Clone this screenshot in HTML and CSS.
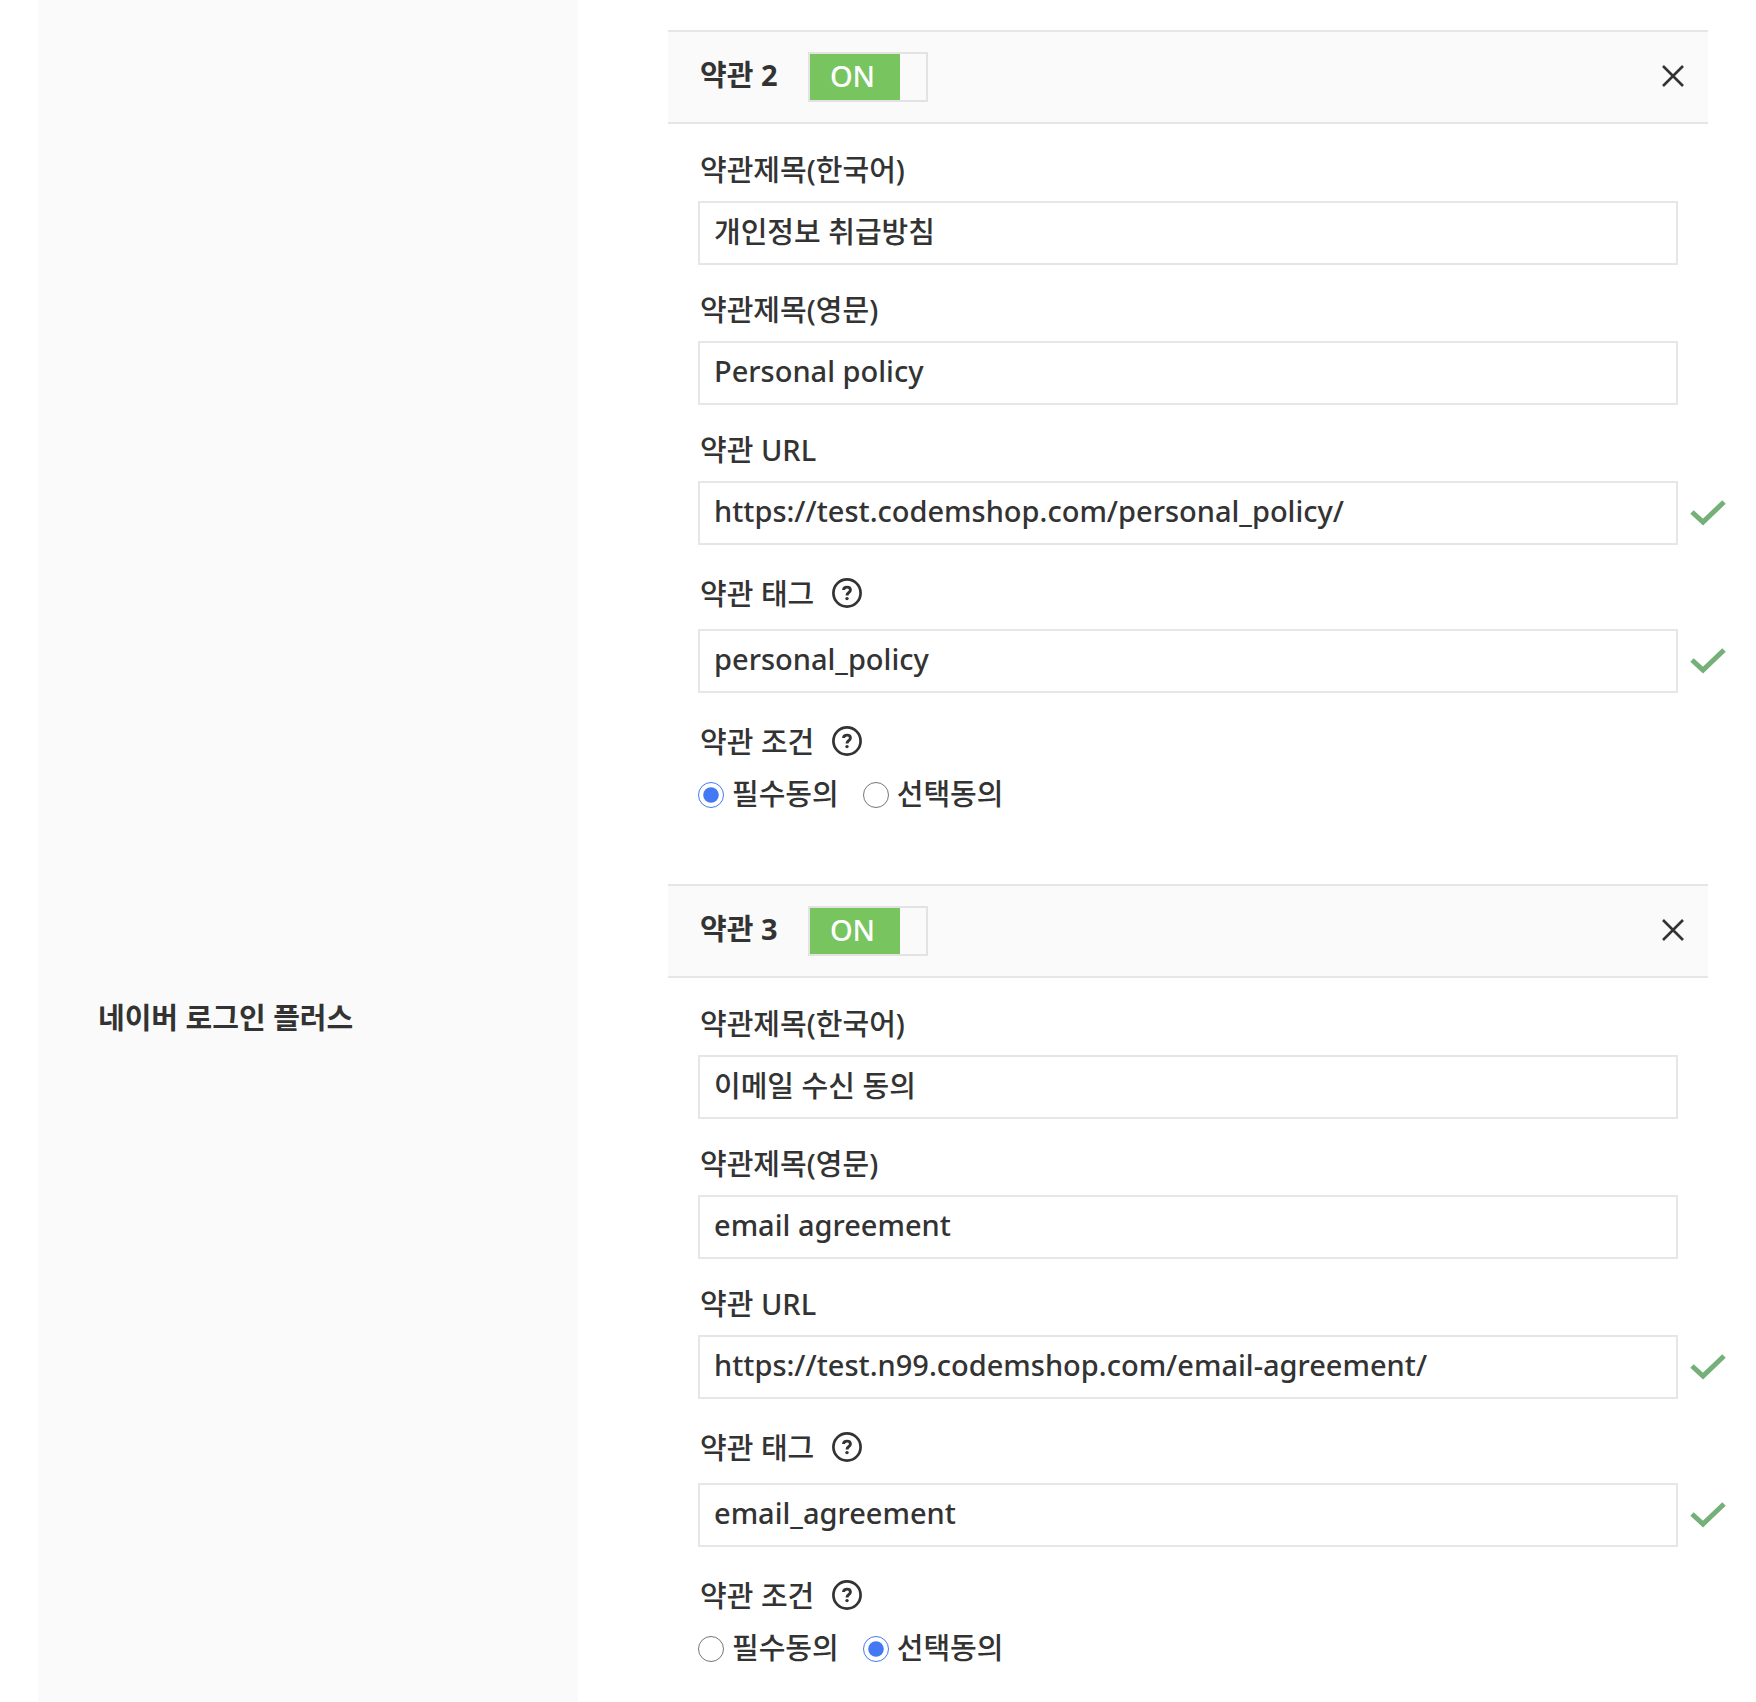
FILE: index.html
```
<!DOCTYPE html>
<html lang="ko">
<head>
    <meta charset="UTF-8">
    <meta name="viewport" content="width=device-width, initial-scale=1.0">
    <title>네이버 로그인 플러스</title>
    <link rel="stylesheet" href="styles.css">
</head>
<body>
    <!-- Shared icons -->
    <svg class="sprite" aria-hidden="true">
        <symbol id="icon-close" viewBox="0 0 24 24">
            <path d="M2 2 L22 22 M22 2 L2 22" fill="none" stroke="#333" stroke-width="2.6"/>
        </symbol>
        <symbol id="icon-check" viewBox="0 0 36 26">
            <path d="M2 12 L13 22 L34 2" fill="none" stroke="#74b077" stroke-width="5"/>
        </symbol>
        <symbol id="icon-help" viewBox="0 0 30 30">
            <circle cx="15" cy="15" r="13.6" fill="none" stroke="#333" stroke-width="2.7"/>
            <path d="M11.5 12 C11.8 8.2 18.4 8.2 18.4 12 C18.4 14.6 15 14.8 15 17.4" fill="none" stroke="#333" stroke-width="2.9"/>
            <circle cx="15" cy="20.6" r="1.7" fill="#333"/>
        </symbol>
    </svg>

    <div class="setting-row">
        <div class="setting-name">네이버 로그인 플러스</div>

        <form class="setting-body">
            <!-- 약관 2 -->
            <section class="terms">
                <div class="terms-header">
                    <h2>약관 2</h2>
                    <label class="toggle">
                        <input type="checkbox" aria-label="약관 2 사용" checked>
                        <span>ON</span>
                    </label>
                    <button type="button" class="remove" aria-label="삭제"><svg><use href="#icon-close"/></svg></button>
                </div>
                <div class="field">
                    <label for="title-ko-2">약관제목(한국어)</label>
                    <input type="text" id="title-ko-2" value="개인정보 취급방침">
                </div>
                <div class="field">
                    <label for="title-en-2">약관제목(영문)</label>
                    <input type="text" id="title-en-2" value="Personal policy">
                </div>
                <div class="field">
                    <label for="url-2">약관 URL</label>
                    <input type="text" id="url-2" value="https://test.codemshop.com/personal_policy/">
                    <svg class="check"><use href="#icon-check"/></svg>
                </div>
                <div class="field has-help">
                    <label for="tag-2">약관 태그 <svg class="help"><use href="#icon-help"/></svg></label>
                    <input type="text" id="tag-2" value="personal_policy">
                    <svg class="check"><use href="#icon-check"/></svg>
                </div>
                <fieldset class="condition">
                    <legend>약관 조건 <svg class="help"><use href="#icon-help"/></svg></legend>
                    <div class="options">
                        <label><input type="radio" name="condition-2" checked><span>필수동의</span></label>
                        <label><input type="radio" name="condition-2"><span>선택동의</span></label>
                    </div>
                </fieldset>
            </section>

            <!-- 약관 3 -->
            <section class="terms">
                <div class="terms-header">
                    <h2>약관 3</h2>
                    <label class="toggle">
                        <input type="checkbox" aria-label="약관 3 사용" checked>
                        <span>ON</span>
                    </label>
                    <button type="button" class="remove" aria-label="삭제"><svg><use href="#icon-close"/></svg></button>
                </div>
                <div class="field">
                    <label for="title-ko-3">약관제목(한국어)</label>
                    <input type="text" id="title-ko-3" value="이메일 수신 동의">
                </div>
                <div class="field">
                    <label for="title-en-3">약관제목(영문)</label>
                    <input type="text" id="title-en-3" value="email agreement">
                </div>
                <div class="field">
                    <label for="url-3">약관 URL</label>
                    <input type="text" id="url-3" value="https://test.n99.codemshop.com/email-agreement/">
                    <svg class="check"><use href="#icon-check"/></svg>
                </div>
                <div class="field has-help">
                    <label for="tag-3">약관 태그 <svg class="help"><use href="#icon-help"/></svg></label>
                    <input type="text" id="tag-3" value="email_agreement">
                    <svg class="check"><use href="#icon-check"/></svg>
                </div>
                <fieldset class="condition">
                    <legend>약관 조건 <svg class="help"><use href="#icon-help"/></svg></legend>
                    <div class="options">
                        <label><input type="radio" name="condition-3"><span>필수동의</span></label>
                        <label><input type="radio" name="condition-3" checked><span>선택동의</span></label>
                    </div>
                </fieldset>
            </section>
        </form>
    </div>
</body>
</html>
```
FILE: styles.css
```
* {
    box-sizing: border-box;
}

body {
    margin: 0;
    background: #fff;
    color: #333;
    font-family: "Noto Sans", "Noto Sans CJK KR", sans-serif;
    font-size: 29px;
    font-weight: 500;
    line-height: 40px;
}

input,
button {
    font: inherit;
    color: inherit;
}

.sprite {
    display: none;
}

.setting-row {
    display: flex;
    min-height: 100vh;
    padding-left: 38px;
}

.setting-name {
    display: flex;
    align-items: center;
    flex: 0 0 540px;
    padding: 334px 60px 0;
    background: #fafafa;
    font-weight: bold;
}

.setting-body {
    flex: 1;
    padding: 30px 0 0 90px;
}

.terms {
    margin-bottom: 66px;
}

.terms:last-child {
    margin-bottom: 0;
}

.terms-header {
    display: flex;
    align-items: center;
    height: 94px;
    margin: 0 48px 20px 0;
    padding: 0 23px 0 32px;
    background: #fafafa;
    border-top: 2px solid #e6e6e6;
    border-bottom: 2px solid #e6e6e6;
}

.terms-header h2 {
    margin: 0 30px 0 0;
    padding-bottom: 4px;
    font-size: 29px;
}

.toggle {
    width: 120px;
    height: 50px;
    border: 2px solid #e3e3e3;
    cursor: pointer;
}

.toggle input {
    position: absolute;
    opacity: 0;
}

.toggle span {
    display: block;
    width: 90px;
    height: 46px;
    padding-right: 4px;
    background: #78c55f;
    color: #fff;
    line-height: 44px;
    text-align: center;
}

.remove {
    margin-left: auto;
    padding: 0 0 2px;
    background: none;
    border: none;
    cursor: pointer;
}

.remove svg {
    display: block;
    width: 24px;
    height: 24px;
}

/* Second column holds the check mark beside the input */
.field {
    display: grid;
    grid-template-columns: 1fr 78px;
    align-items: center;
    margin-bottom: 19px;
    padding-left: 30px;
}

.field > label {
    grid-column: span 2;
    height: 57px;
    padding-left: 2px;
    line-height: 52px;
}

.field > input {
    width: 100%;
    height: 64px;
    padding: 0 14px 6px;
    background: #fff;
    border: 2px solid #e6e6e6;
    outline: none;
}

.has-help > label {
    height: 65px;
    line-height: 60px;
}

.check {
    width: 36px;
    height: 26px;
    margin-left: 12px;
}

.help {
    width: 30px;
    height: 30px;
    margin-left: 10px;
    vertical-align: -3px;
}

.condition {
    margin: 0;
    padding: 0 0 0 30px;
    border: none;
}

.condition legend {
    padding: 0 0 0 2px;
    line-height: 60px;
}

.options {
    display: flex;
    gap: 24px;
    line-height: 46px;
}

.options label {
    display: flex;
    align-items: center;
}

.options span {
    padding-bottom: 2px;
    line-height: 44px;
}

.options input {
    width: 26px;
    height: 26px;
    margin: 0 8px 0 0;
    accent-color: #4379f2;
}
```
